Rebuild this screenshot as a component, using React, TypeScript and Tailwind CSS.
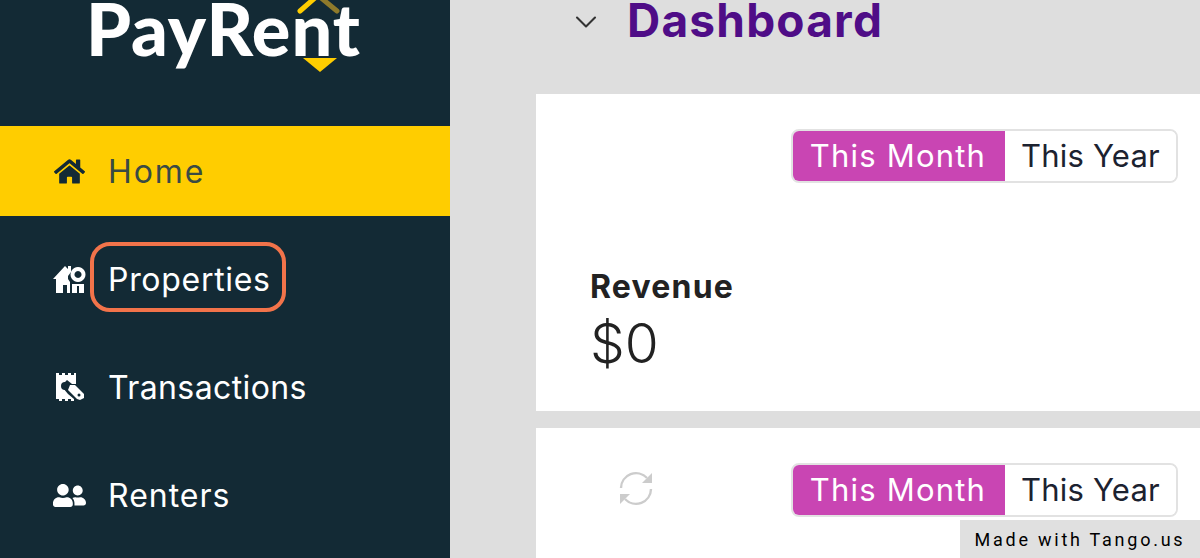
import { ChevronDown } from "lucide-react";
import { FaHome, FaUserFriends } from "react-icons/fa";

function PropertyIcon() {
	return (
		<svg width="33" height="29" viewBox="0 0 33 29" fill="white">
			<path d="M0 14 L12 1 L15 4 L15 1 L18 1 L18 7 L15 11 L15 14 L17 17 L17 28 L14 28 L14 20 L10 20 L10 28 L3 28 L3 14 Z" />
			<path d="M25 2 a7.5 7.5 0 1 1 -0.01 0 Z M25 6 a3.5 3.5 0 1 0 0.01 0 Z" fillRule="evenodd" />
			<rect x="19" y="19" width="12" height="9" />
			<rect x="24" y="21" width="2" height="7" fill="#132a35" />
		</svg>
	);
}

function TransactionIcon() {
	return (
		<svg width="30" height="31" viewBox="0 0 30 31" fill="white">
			<path d="M1 1 H4 V3 H7 V1 H10 V3 H13 V1 H16 V3 H19 V1 H21 V12 H17 L12 8 L9 11 L8 16 L13 22 L19 27 V29 H16 V27 H13 V29 H10 V27 H7 V29 H4 V27 H1 Z" />
			<circle cx="10" cy="14" r="4" fill="#132a35" />
			<path d="M15 13 L20 13 L29 22 L29 26 L25 28 L22 27 L13 18 Z" />
			<circle cx="24" cy="23" r="1.5" fill="#132a35" />
		</svg>
	);
}

function SyncIcon() {
	return (
		<svg width="34" height="35" viewBox="0 0 34 35" fill="none" stroke="#cccccc" strokeWidth="2.4" className="ml-[83px] mt-[8px]">
			<path d="M2 17 A15 15 0 0 1 28 7" />
			<path d="M32 18 A15 15 0 0 1 6 28" />
			<path d="M33 2 V12 H23 Z" fill="#cccccc" stroke="none" />
			<path d="M1 33 V23 H11 Z" fill="#cccccc" stroke="none" />
		</svg>
	);
}

function Toggle() {
	return (
		<div className="flex h-[54px] w-[387px] text-[31px] rounded-lg overflow-hidden border-2 border-[#e2e2e2]">
			<div className="-m-[2px] mr-0 w-[214px] bg-[#c945b3] text-white tracking-[1.2px] flex items-center justify-center">
				This Month
			</div>
			<div className="flex-1 bg-white text-[#1c2230] tracking-[0.2px] flex items-center justify-center">
				This Year
			</div>
		</div>
	);
}

function NavItem({ icon, label, active, boxed, spacing }: { icon: React.ReactNode; label: string; active?: boolean; boxed?: boolean; spacing: string }) {
	return (
		<div className={`h-[90px] mb-[18px] flex items-center pl-[53px] ${active ? "bg-[#ffcd00] text-[#3a4a44]" : "text-white"}`}>
			<span className="w-[33px] flex justify-center">{icon}</span>
			<span className={`ml-[4px] pl-[14px] pr-[11px] h-[70px] pt-[5px] mb-[4px] flex items-center rounded-[20px] border-[4px] text-[32px] ${spacing} ${boxed ? "border-[#f2734a]" : "border-transparent"}`}>
				{label}
			</span>
		</div>
	);
}

export default function App() {
	return (
		<div className="relative flex h-[558px] w-[1200px] overflow-hidden bg-[#dedede] font-['Inter','Open_Sans',sans-serif]">
			<aside className="w-[450px] shrink-0 bg-[#132a35]">
				<div className="relative h-[126px] pl-[86px] pt-[3px]">
					<div className="font-['Lato',sans-serif] font-black text-white text-[72px] leading-[50px] tracking-[1px]">PayRent</div>
					<svg className="absolute left-[296px] top-0" width="46" height="72" viewBox="0 0 46 72">
						<path d="M4 11 L20 -3" stroke="#ffcd00" strokeWidth="5" strokeLinecap="round" fill="none" />
						<path d="M24 -3 L41 11" stroke="#8f7a2b" strokeWidth="5" strokeLinecap="round" fill="none" />
						<path d="M7 58 H41 L24 72 Z" fill="#ffcd00" />
					</svg>
				</div>
				<nav>
					<NavItem icon={<FaHome size={31} color="#132a35" />} label="Home" active spacing="tracking-[1.9px]" />
					<NavItem icon={<PropertyIcon />} label="Properties" boxed spacing="tracking-[0.7px]" />
					<NavItem icon={<TransactionIcon />} label="Transactions" spacing="tracking-[0.4px]" />
					<NavItem icon={<FaUserFriends size={33} />} label="Renters" spacing="tracking-[1px]" />
				</nav>
			</aside>

			<main className="flex-1 min-w-0">
				<div className="h-[94px] flex items-start pl-[118px]">
					<ChevronDown size={36} strokeWidth={1.4} color="#333" className="mt-[4px]" />
					<h1 className="ml-[23px] -mt-[5px] text-[46px] leading-[50px] font-bold tracking-[1.2px] text-[#4f0d87]">Dashboard</h1>
				</div>
				<section className="ml-[86px] h-[317px] bg-white pt-[35px]">
					<div className="ml-[256px] -translate-x-px"><Toggle /></div>
					<div className="mt-[86px] ml-[54px] text-[32px] leading-[36px] font-bold tracking-[1.2px] text-[#222]">Revenue</div>
					<div className="ml-[54px] mt-[8px] text-[55px] leading-[60px] font-light text-[#222]">$0</div>
				</section>
				<section className="ml-[86px] mt-[17px] h-[140px] bg-white pt-[35px] flex items-start">
					<SyncIcon />
					<div className="ml-[138px]"><Toggle /></div>
				</section>
			</main>

			<div className="absolute right-0 bottom-0 h-[38px] w-[240px] bg-[#e0e0e0] flex items-center justify-center font-['Roboto',sans-serif] text-[18px] tracking-[2.75px] text-black">
				Made with Tango.us
			</div>
		</div>
	);
}
